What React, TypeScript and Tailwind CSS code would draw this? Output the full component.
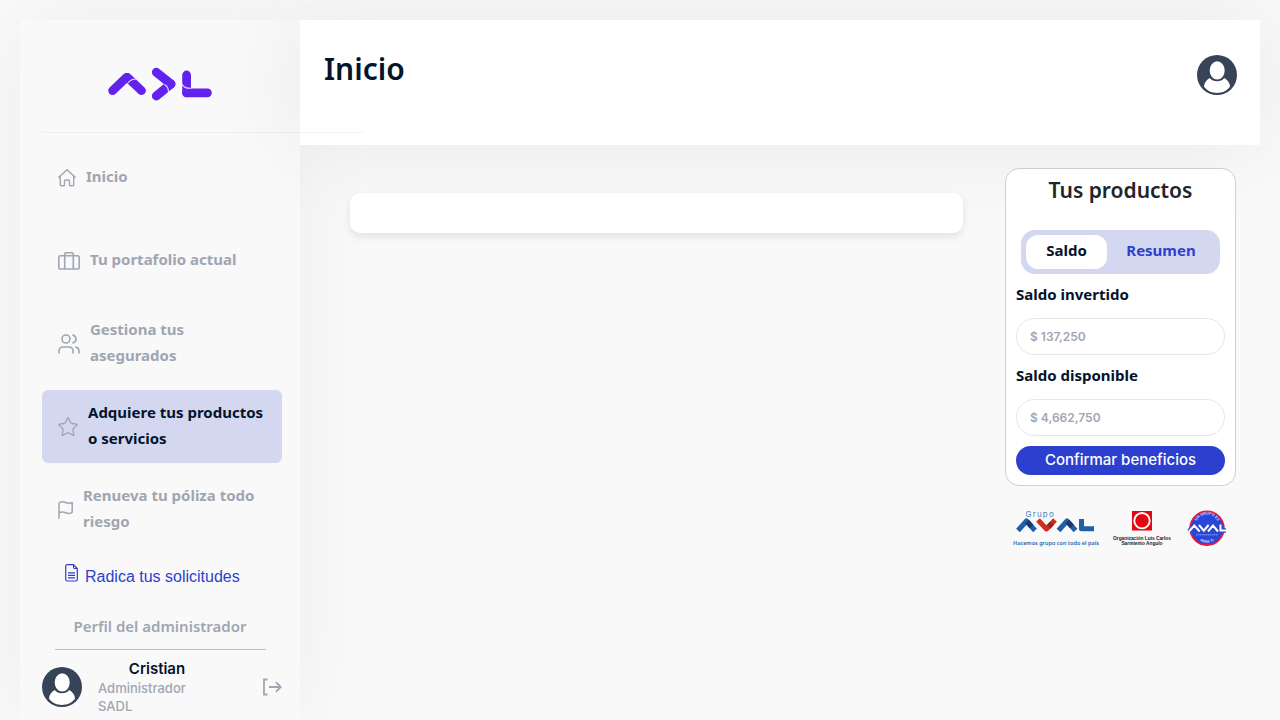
import type { ReactNode } from "react";
import { Star, Users } from "lucide-react";

function AdlLogo() {
  return (
    <svg viewBox="0 0 104 34" className="h-[34px] w-[104px]" role="img" aria-label="ADL">
      <g fill="none" stroke="#6323ee" strokeWidth="8.800" strokeLinecap="round" strokeLinejoin="round">
        <path d="M4.600 23.600 18.500 10.400" />
        <path d="M19.500 10.400 33.500 23.600" />
        <path d="M48.300 5.200 63 17" />
        <path d="M63 17 48.300 29" />
        <path d="M78.600 25.800H99.400" />
        <path d="M78.600 8V25.800" />
      </g>
      <g fill="none" stroke="#eadfff" strokeWidth="1.100">
        <path d="M20 16Q22.500 12 28.500 12" />
        <path d="M56.500 17.500Q60.500 19.500 60.500 25.500" />
        <path d="M74 17Q75.500 21.600 83.500 21.300" />
      </g>
    </svg>
  );
}

function Avatar() {
  return (
    <svg viewBox="0 0 40 40" className="size-10 shrink-0" role="img" aria-label="Usuario">
      <circle cx="20" cy="20" r="20" fill="#374357" />
      <path
        d="M12.800 23C9 25 7 28.500 7 31.800C10.500 36.200 15 38 20 38S29.500 36.200 33 31.800C33 28.500 31 25 27.200 23C25.500 25.300 23 26.300 20 26.300S14.500 25.300 12.800 23Z"
        fill="#fff"
      />
      <ellipse cx="20.200" cy="15.400" rx="8.800" ry="10.300" fill="#374357" />
      <ellipse cx="20.200" cy="15.400" rx="7.500" ry="9.200" fill="#fff" />
    </svg>
  );
}

function HomeIcon() {
  return (
    <svg viewBox="0 0 18 18" className="size-[18px] shrink-0" fill="none" stroke="currentColor" strokeWidth="1.400" strokeLinecap="round" strokeLinejoin="round">
      <path d="M.8 8.200 9 .8l8.200 7.400M2.300 7v8.500q0 1.200 1.200 1.200h2q1 0 1-1V12.300q0-1.300 1.300-1.300h2.400q1.300 0 1.300 1.300v3.400q0 1 1 1h2q1.200 0 1.200-1.200V7" />
    </svg>
  );
}

function SuitcaseIcon() {
  return (
    <svg viewBox="0 0 22 18" className="h-[18px] w-[22px] shrink-0" fill="none" stroke="currentColor" strokeWidth="1.600" strokeLinejoin="round">
      <rect x=".8" y="3.800" width="20.400" height="13.200" rx="1.800" />
      <path d="M6.700 17V2.300Q6.700.8 8.200.8h5.600q1.500 0 1.500 1.500V17" />
    </svg>
  );
}

function FlagIcon() {
  return (
    <svg viewBox="0 0 15 18" className="h-[18px] w-[15px] shrink-0" fill="none" stroke="currentColor" strokeWidth="1.500" strokeLinecap="round" strokeLinejoin="round">
      <path d="M1 17.300V2Q4 0 7.500 1.500T14.200 1.500V11.300Q11 13.300 7.500 11.700T1 12" />
    </svg>
  );
}

function DocumentIcon() {
  return (
    <svg viewBox="0 0 13 18" className="h-[18px] w-[13px] shrink-0" fill="none" stroke="currentColor" strokeWidth="1.200" strokeLinejoin="round">
      <path d="M8.500.7H2.200Q.7.700.7 2.200v13.300q0 1.500 1.500 1.500h8.600q1.500 0 1.500-1.500V4.500L8.500.7v2.600q0 1.200 1.200 1.200h2.600" />
      <path d="M3 8.900h7M3 11.400h7M3 13.900h7" />
    </svg>
  );
}

function LogoutIcon() {
  return (
    <svg viewBox="0 0 20 18" className="h-[18px] w-5" fill="none" stroke="currentColor" strokeWidth="1.800">
      <path d="M5.500 1.500H2v15h3.500" />
      <path d="M7 9h11.500M14 4.200 18.700 9 14 13.800" />
    </svg>
  );
}

function AvalLogo() {
  return (
    <svg viewBox="0 0 84 38" className="h-[38px] w-[84px] overflow-visible" role="img" aria-label="Grupo Aval">
      <text x="12.500" y="7.800" fontSize="8" letterSpacing="1.200" fontFamily="Inter, sans-serif" fill="#4c83bd">Grupo</text>
      <g fill="none" strokeWidth="5" strokeLinejoin="round">
        <path d="M5 21.500 13.500 12 22 21.500" stroke="#1f5fa9" />
        <path d="m14 12.500 4.500 5" stroke="#173b69" />
        <path d="m25 11 8.500 9 8.500-9" stroke="#d52b1e" />
        <path d="m35.500 18 3.500-3.800" stroke="#9c211c" />
        <path d="M45.500 21.500 54 12l8.500 9.500" stroke="#1f5fa9" />
        <path d="m54.500 12.500 4.500 5" stroke="#173b69" />
        <path d="M68.500 10v9.800H81" stroke="#1f5fa9" />
      </g>
      <text x="0" y="35.500" fontSize="6" fontWeight="600" fontFamily="Noto Sans, sans-serif" textRendering="geometricPrecision" fill="#2b66ad" className="text-[5.500px]">Hacemos grupo con todo el país</text>
    </svg>
  );
}

function OrganizationLogo() {
  return (
    <svg viewBox="0 0 58 38" className="h-[38px] w-[58px] overflow-visible" role="img" aria-label="Organización Luis Carlos Sarmiento Angulo">
      <rect x="19" y="2" width="20" height="19.500" fill="#e30613" />
      <circle cx="29" cy="11.700" r="7.700" fill="none" stroke="#fff" strokeWidth="1.900" />
      <g fontSize="4.800" fontWeight="700" fontFamily="Liberation Sans, sans-serif" textAnchor="middle" fill="#222">
        <text x="29" y="30.500">Organización Luis Carlos</text>
        <text x="29" y="36">Sarmiento Angulo</text>
      </g>
    </svg>
  );
}

function AvalSeal() {
  const mark = "m2 22.500 5.300-6 5.300 6M12 16l4.800 5.700L21.600 16M21 22.500l5-6 5 6M33.500 15.500v6h5.500";
  return (
    <svg viewBox="0 0 40 38" className="h-[38px] w-10" role="img" aria-label="Un grupo es Aval para ti">
      <defs>
        <path id="seal-top" d="M8.500 17a11.500 11.500 0 0 1 23 0" />
        <path id="seal-bottom" d="M6 20a14 14 0 0 0 28 0" />
      </defs>
      <circle cx="20" cy="19.300" r="16.800" fill="#2846d8" stroke="#e4173e" strokeWidth="1.800" />
      <g fontSize="3.800" fontWeight="700" fontFamily="Inter, sans-serif" textAnchor="middle" fill="#c5cfff">
        <text><textPath href="#seal-top" startOffset="50%">UN GRUPO ES</textPath></text>
        <text><textPath href="#seal-bottom" startOffset="50%">PARA TI</textPath></text>
      </g>
      <g fill="none">
        <path d={mark} stroke="#2846d8" strokeWidth="4.500" />
        <path d={mark} stroke="#fff" strokeWidth="2" />
      </g>
      <path d="M9 25.800h22" stroke="#8fa2fa" strokeWidth="1" strokeDasharray="1.500 .5" />
    </svg>
  );
}

function NavItem({ icon, label, active = false }: { icon: ReactNode; label: string; active?: boolean }) {
  return (
    <li>
      <a
        href="#"
        aria-current={active ? "page" : undefined}
        className={
          active
            ? "flex h-[73px] items-center gap-2.5 rounded-md bg-[#d3d8f0] px-4 text-[#9fa6b2]"
            : "flex h-[73px] items-center gap-2.5 px-4 text-[#9fa6b2]"
        }
      >
        {icon}
        <span className={active ? "pb-1 text-[15px] leading-[26px] font-bold text-[#05132b]" : "pb-1 text-[15px] leading-[26px] font-bold"}>{label}</span>
      </a>
    </li>
  );
}

function BalanceField({ id, label, value }: { id: string; label: string; value: string }) {
  return (
    <div className="flex flex-col">
      <label htmlFor={id} className="h-11 pt-[7px] text-[15px] leading-[26px] font-bold text-[#05132b]">
        {label}
      </label>
      <input
        id={id}
        readOnly
        defaultValue={value}
        className="h-[37px] w-full rounded-full border border-[#e2e8ee] bg-white px-[13px] font-['Inter',sans-serif] text-xs font-semibold text-[#9fa6b2]"
      />
    </div>
  );
}

export default function App() {
  return (
    <div className="flex min-h-screen overflow-hidden bg-[#f9f9f9] px-5 pt-5 font-['Noto_Sans',sans-serif]">
      <aside className="w-[280px] shrink-0 bg-[#f9f9f9] pr-[18px] pl-[22px] shadow-[0_0_80px_rgba(0,0,0,0.05)]">
        <div className="flex h-28 items-end justify-center pr-1 pb-[31px]">
          <AdlLogo />
        </div>
        <hr className="relative z-10 w-[323px] border-black/4" />
        <nav aria-label="Principal" className="pt-2">
          <ul className="flex flex-col gap-2.5">
            <NavItem icon={<HomeIcon />} label="Inicio" />
            <NavItem icon={<SuitcaseIcon />} label="Tu portafolio actual" />
            <NavItem icon={<Users viewBox="1 2 22 20" className="h-5 w-[22px] shrink-0" strokeWidth={1.6} />} label="Gestiona tus asegurados" />
            <NavItem icon={<Star viewBox="1 1 22 22" className="size-5 shrink-0" strokeWidth={1.5} />} label="Adquiere tus productos o servicios" active />
            <NavItem icon={<FlagIcon />} label="Renueva tu póliza todo riesgo" />
          </ul>
        </nav>
        <a href="#" className="mt-[18px] flex gap-[7px] pl-[23px] font-['Liberation_Sans',sans-serif] text-base leading-[26px] text-[#2c3fcf]">
          <DocumentIcon />
          Radica tus solicitudes
        </a>
        <h2 className="mt-[23px] pr-1 text-center text-[15px] leading-[26px] font-semibold text-[#9fa6b2]">Perfil del administrador</h2>
        <hr className="mt-[10px] mr-4 ml-[13px] border-[#bcbcd4]" />
        <div className="flex items-center gap-4 pt-[9px] pb-1">
          <Avatar />
          <div className="w-[118px] font-['Inter',sans-serif] text-[13px] leading-[18px] font-medium text-[#9fa6b2]">
            <p className="text-center text-[15px] leading-5 font-semibold text-[#05132b]">Cristian</p>
            <p>Administrador</p>
            <p>SADL</p>
          </div>
          <button type="button" aria-label="Cerrar sesión" className="ml-auto text-[#9fa6b2]">
            <LogoutIcon />
          </button>
        </div>
      </aside>
      <div className="flex min-w-0 flex-1 flex-col">
        <header className="flex h-[125px] items-start justify-between bg-white pt-[29px] pr-[23px] pl-6 shadow-[0_0_100px_rgba(0,0,0,0.07)]">
          <h1 className="text-3xl leading-10 font-semibold text-[#05132b]">Inicio</h1>
          <button type="button" aria-label="Cuenta" className="mt-1.5">
            <Avatar />
          </button>
        </header>
        <div className="relative flex items-start gap-[42px] pt-[23px] pr-6 pl-[50px]">
          <main className="mt-[25px] h-10 flex-1 rounded-[10px] bg-white shadow-[0_4px_8px_rgba(0,0,0,0.09)]" />
          <div className="w-[231px] shrink-0">
            <section className="rounded-[14px] border border-[#cfcfcf] bg-white p-2.5 pt-[5px]">
              <h2 className="text-center text-[21px] leading-8 font-semibold text-[#212529]">Tus productos</h2>
              <div role="tablist" className="mx-[5px] mt-6 flex h-11 rounded-[14px] bg-[#d3d8f0] p-[5px] text-[15px] font-bold">
                <button type="button" role="tab" aria-selected="true" className="w-[81px] rounded-xl bg-white pb-[3px] text-[#05132b]">
                  Saldo
                </button>
                <button type="button" role="tab" aria-selected="false" className="flex-1 pb-[3px] text-[#2c3fcf]">
                  Resumen
                </button>
              </div>
              <BalanceField id="invertido" label="Saldo invertido" value="$ 137,250" />
              <BalanceField id="disponible" label="Saldo disponible" value="$ 4,662,750" />
              <button type="button" className="mt-2.5 h-[29px] w-full rounded-full bg-[#2c3fcf] font-['Inter',sans-serif] text-[15px] font-medium text-white">
                Confirmar beneficios
              </button>
            </section>
            <footer className="flex justify-between pt-[23px] pr-[9px] pl-2">
              <AvalLogo />
              <OrganizationLogo />
              <AvalSeal />
            </footer>
          </div>
        </div>
      </div>
    </div>
  );
}
